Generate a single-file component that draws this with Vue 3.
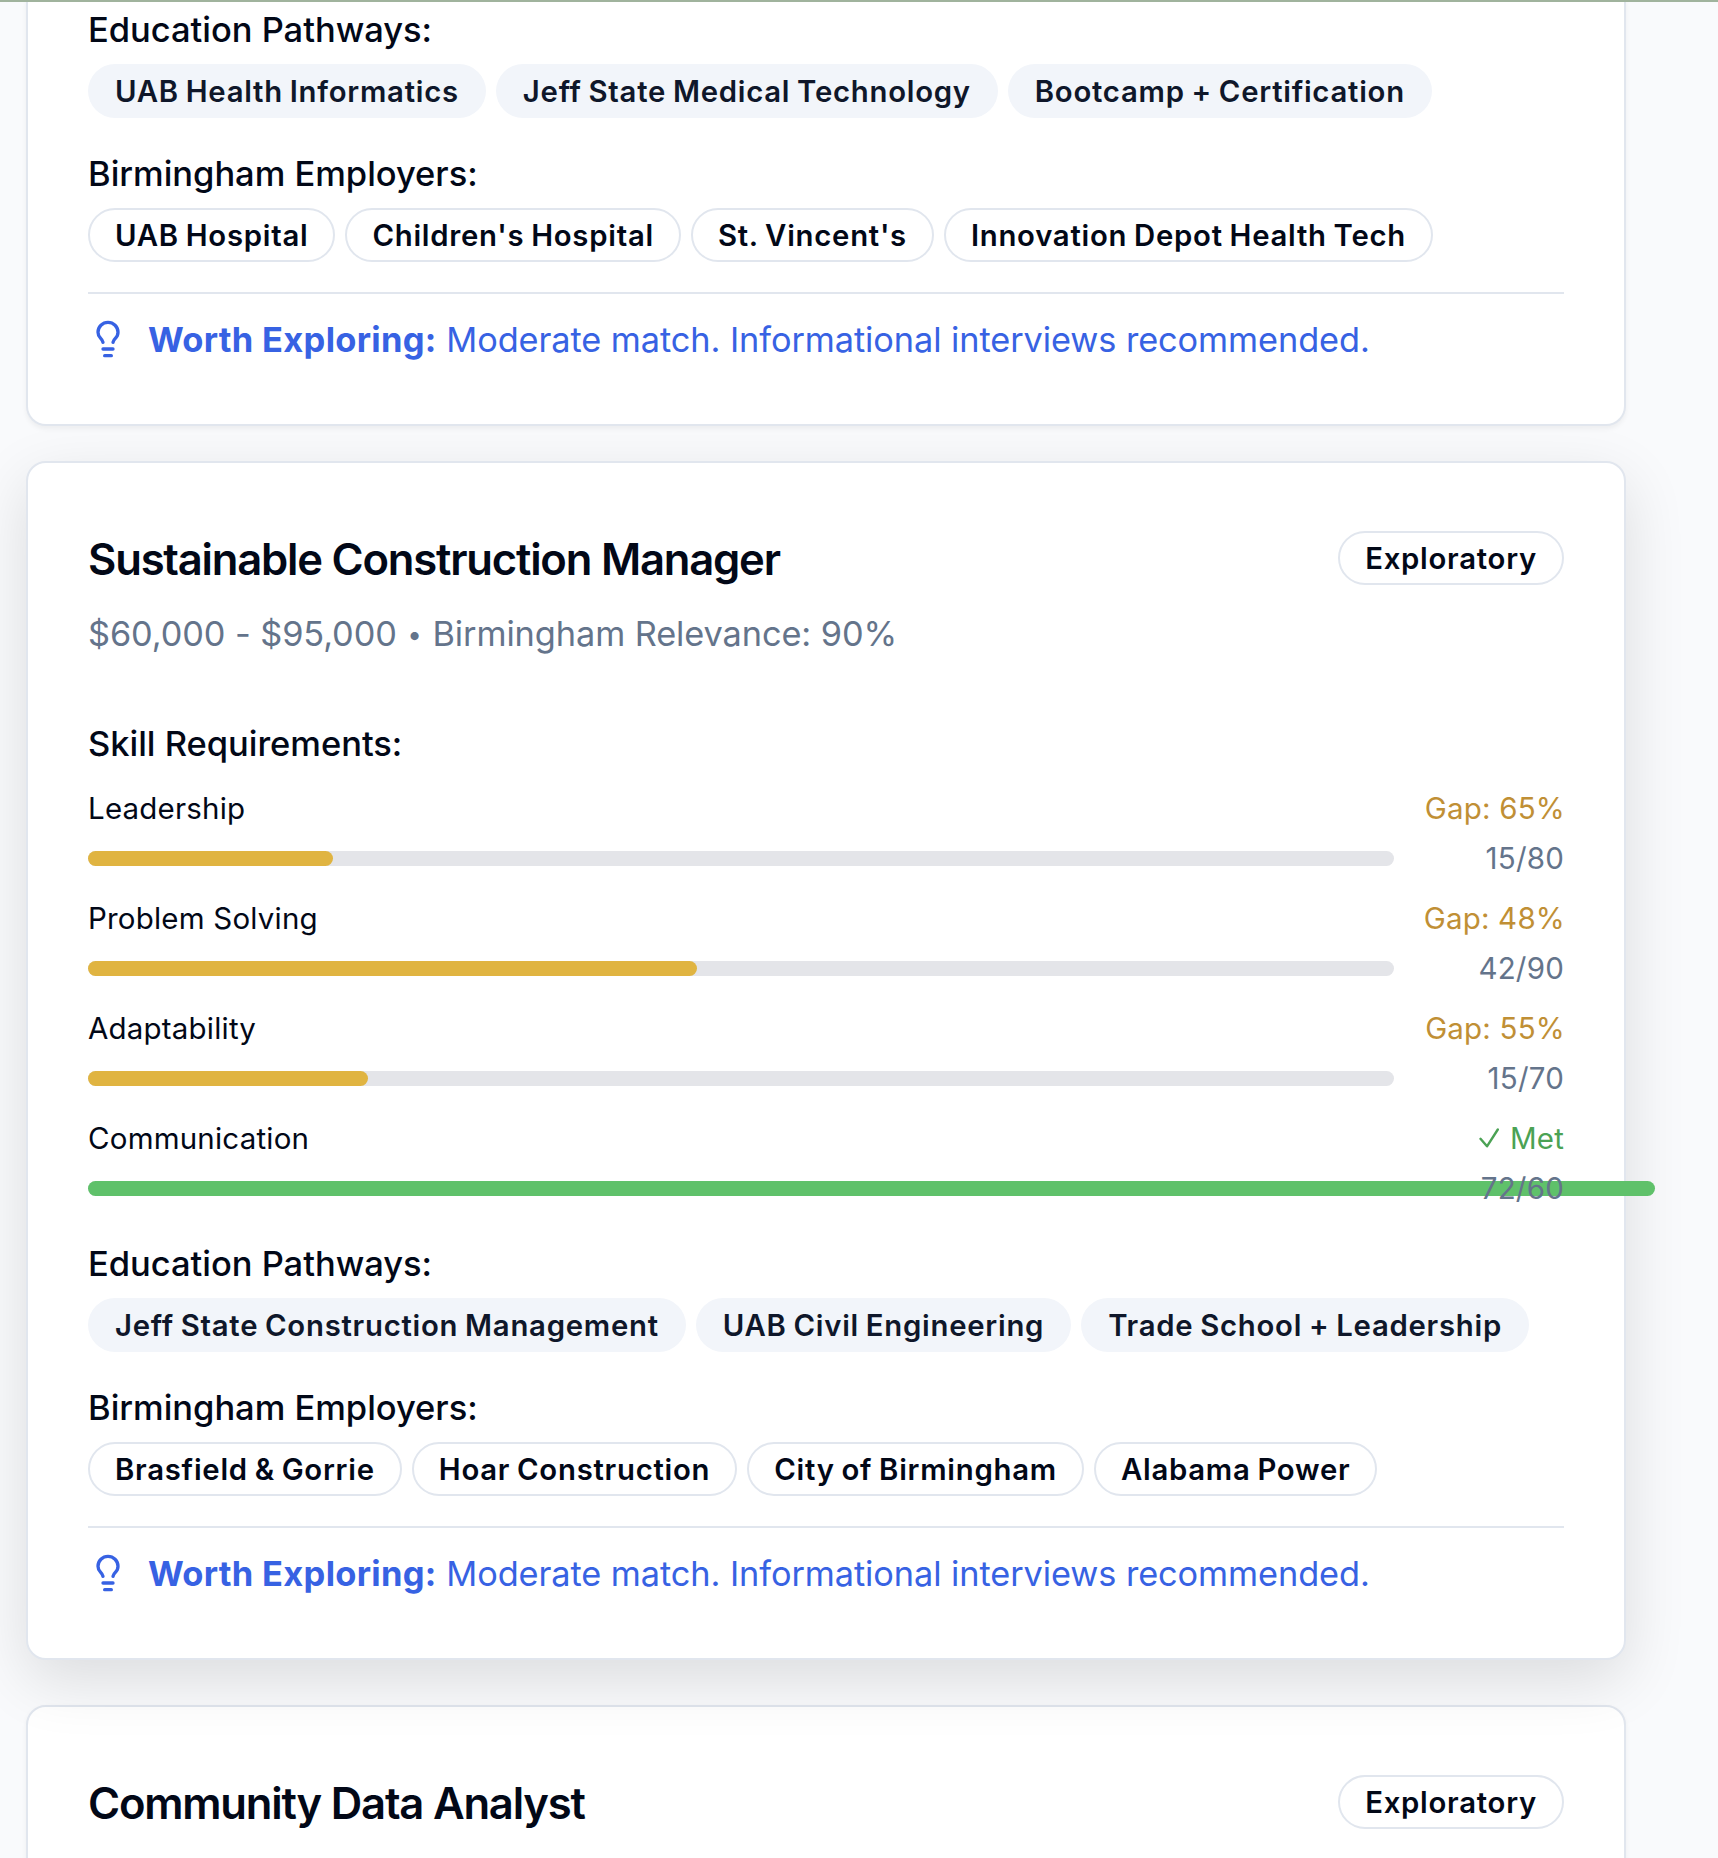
<script setup>
const careers = [
  {
    title: '',
    partial: 'tail',
    skills: [],
    education: ['UAB Health Informatics', 'Jeff State Medical Technology', 'Bootcamp + Certification'],
    employers: ['UAB Hospital', "Children's Hospital", "St. Vincent's", 'Innovation Depot Health Tech'],
  },
  {
    title: 'Sustainable Construction Manager',
    partial: '',
    raised: true,
    salary: '$60,000 - $95,000',
    relevance: 90,
    skills: [
      { name: 'Leadership', current: 15, required: 80, gap: 65 },
      { name: 'Problem Solving', current: 42, required: 90, gap: 48 },
      { name: 'Adaptability', current: 15, required: 70, gap: 55 },
      { name: 'Communication', current: 72, required: 60, gap: 0 },
    ],
    education: ['Jeff State Construction Management', 'UAB Civil Engineering', 'Trade School + Leadership'],
    employers: ['Brasfield & Gorrie', 'Hoar Construction', 'City of Birmingham', 'Alabama Power'],
  },
  {
    title: 'Community Data Analyst',
    partial: 'head',
    skills: [],
    education: [],
    employers: [],
  },
]
</script>

<template>
  <main class="page">
    <div class="topline"></div>
    <div class="list">
      <article
        v-for="(career, i) in careers"
        :key="i"
        class="card"
        :class="[career.partial, { raised: career.raised }]"
      >
        <header v-if="career.title" class="header">
          <div class="title-row">
            <h3 class="title">{{ career.title }}</h3>
            <span class="badge outline">Exploratory</span>
          </div>
          <p v-if="career.salary" class="subtitle">
            {{ career.salary }} <span class="dot">•</span> Birmingham Relevance: {{ career.relevance }}%
          </p>
        </header>

        <div v-if="career.education.length" class="content">
          <section v-if="career.skills.length">
            <p class="label">Skill Requirements:</p>
            <div class="skills">
              <div v-for="s in career.skills" :key="s.name" class="skill">
                <div class="skill-head">
                  <span>{{ s.name }}</span>
                  <span v-if="s.gap" class="gap">Gap: {{ s.gap }}%</span>
                  <span v-else class="met">
                    <svg class="check" viewBox="0 0 20 20" fill="none" stroke="currentColor" stroke-width="2.4" stroke-linecap="round" stroke-linejoin="round">
                      <path d="M1.5 10.8 8 18.3 18.8 1.5" />
                    </svg>Met
                  </span>
                </div>
                <div class="skill-bar">
                  <div class="track">
                    <div
                      class="fill"
                      :class="{ full: !s.gap }"
                      :style="{ width: (s.current / s.required) * 100 + '%' }"
                    ></div>
                  </div>
                  <span class="score">{{ s.current }}/{{ s.required }}</span>
                </div>
              </div>
            </div>
          </section>

          <section>
            <p class="label">Education Pathways:</p>
            <div class="badges">
              <span v-for="e in career.education" :key="e" class="badge secondary">{{ e }}</span>
            </div>
          </section>

          <section>
            <p class="label">Birmingham Employers:</p>
            <div class="badges">
              <span v-for="e in career.employers" :key="e" class="badge outline">{{ e }}</span>
            </div>
          </section>

          <div class="advice">
            <svg class="bulb" viewBox="0 0 24 24" fill="none" stroke="currentColor" stroke-width="2" stroke-linecap="round" stroke-linejoin="round">
              <path d="M15 14c.2-1 .7-1.7 1.5-2.5 1-.9 1.5-2.2 1.5-3.5A6 6 0 0 0 6 8c0 1 .2 2.2 1.5 3.5.7.7 1.3 1.5 1.5 2.5" />
              <path d="M9 18h6" />
              <path d="M10 22h4" />
            </svg>
            <p class="advice-text"><strong>Worth Exploring:</strong> Moderate match. Informational interviews recommended.</p>
          </div>
        </div>
      </article>
    </div>
  </main>
</template>

<style>
body {
  margin: 0;
  overflow: hidden;
}
</style>

<style scoped>
.page {
  box-sizing: border-box;
  position: relative;
  width: 1718px;
  height: 1858px;
  overflow: hidden;
  background: #f9fafc;
  color: #020817;
  font-family: Inter, "Noto Sans", sans-serif;
}
.topline {
  position: absolute;
  z-index: 5;
  inset: 0 0 auto;
  height: 2px;
  background: #a0b39d;
}
h3,
p {
  margin: 0;
}
.list {
  display: flex;
  flex-direction: column;
  gap: 40px;
  padding: 0 92px 0 26px;
}
.card {
  box-sizing: border-box;
  flex: none;
  padding: 60px;
  border: 2px solid #e1e6ee;
  border-radius: 20px;
  background: #fff;
  box-shadow: 0 2.5px 5px rgba(0, 0, 0, 0.05);
}
.card.tail {
  padding-top: 4px;
  border-top: 0;
  border-radius: 0 0 20px 20px;
}
.card.head {
  height: 240px;
}
.card.raised {
  transform: translateY(-5px);
  box-shadow: 0 20px 62px rgba(0, 0, 0, 0.12);
}
.header {
  display: flex;
  flex-direction: column;
  gap: 15px;
  margin-bottom: 60px;
}
.title-row {
  display: flex;
  align-items: center;
  justify-content: space-between;
  height: 70px;
}
.title {
  padding-top: 3px;
  font-size: 43.6px;
  font-weight: 600;
  line-height: 70px;
  letter-spacing: -1.21px;
}
.subtitle,
.label,
.advice-text {
  box-sizing: border-box;
  height: 50px;
  padding-top: 1px;
  line-height: 50px;
}
.subtitle {
  color: #64748b;
  font-size: 34.3px;
  letter-spacing: -0.08px;
}
.dot {
  margin: 0 1px;
  font-size: 26px;
  line-height: 1;
  vertical-align: 2px;
}
.content {
  display: flex;
  flex-direction: column;
  gap: 30px;
}
.label {
  margin-bottom: 10px;
  font-size: 34.5px;
  font-weight: 500;
  letter-spacing: -0.03px;
}
.skills {
  display: flex;
  flex-direction: column;
  gap: 20px;
  padding-top: 10px;
}
.skill {
  display: flex;
  flex-direction: column;
  gap: 10px;
  font-size: 29.5px;
  line-height: 40px;
  letter-spacing: 0.2px;
}
.skill-head {
  display: flex;
  justify-content: space-between;
}
.gap {
  margin-right: -1px;
  color: #c08f35;
}
.met {
  display: flex;
  align-items: center;
  color: #4ba254;
}
.check {
  width: 20px;
  height: 20px;
  margin-right: 10.5px;
}
.skill-bar {
  display: flex;
  align-items: center;
  gap: 20px;
}
.track {
  flex: 1;
  height: 15px;
  border-radius: 8px;
  background: #e4e5e9;
}
.fill {
  height: 100%;
  border-radius: 8px;
  background: #e0b441;
}
.fill.full {
  background: #5fc16a;
}
.score {
  z-index: 1;
  width: 150px;
  color: #64748b;
  text-align: right;
}
.badges {
  display: flex;
  gap: 10px;
}
.badge {
  box-sizing: border-box;
  flex: none;
  height: 54px;
  padding: 6px 25px 4px;
  border: 2px solid transparent;
  border-radius: 27px;
  font-size: 29.3px;
  font-weight: 600;
  line-height: 40px;
  letter-spacing: 0.75px;
  word-spacing: -1.3px;
  white-space: nowrap;
}
.badge.outline {
  border-color: #e1e6ee;
}
.badge.secondary {
  background: #f2f5fa;
  background-clip: border-box;
  color: #0f172a;
}
.advice {
  display: flex;
  align-items: center;
  gap: 20px;
  padding-top: 20px;
  border-top: 2px solid #e1e6ee;
  color: #3762e3;
}
.bulb {
  width: 40px;
  height: 40px;
}
.advice-text {
  font-size: 34.3px;
  letter-spacing: -0.07px;
}
.advice-text strong {
  font-size: 34.5px;
  font-weight: 700;
  letter-spacing: 0.29px;
}
</style>
